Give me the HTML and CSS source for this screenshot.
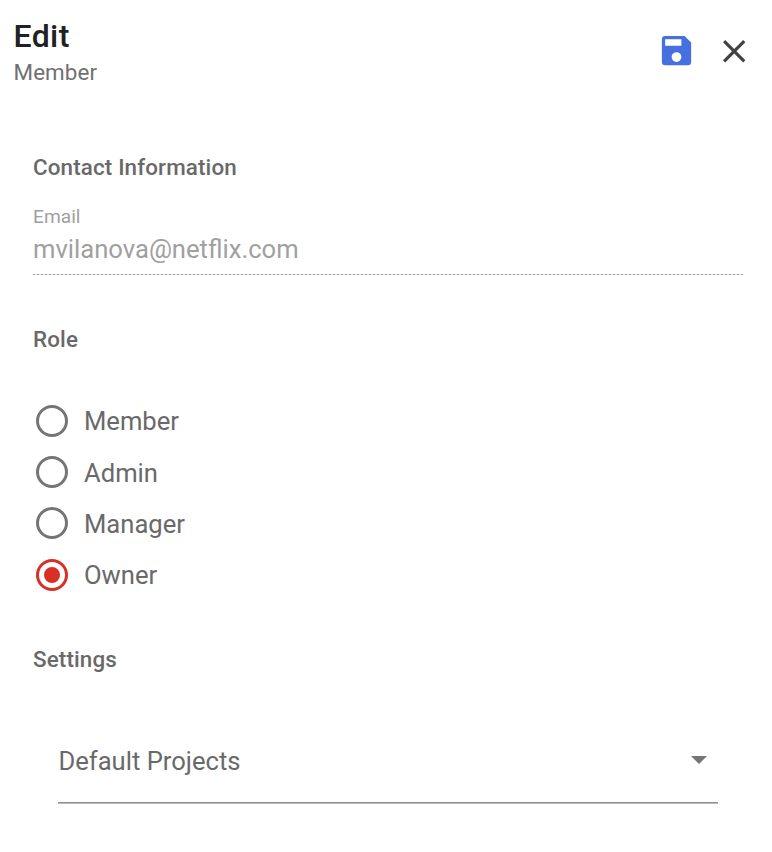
FILE: index.html
```
<!DOCTYPE html>
<html lang="en">
<head>
<meta charset="utf-8">
<title>Edit Member</title>
<link rel="stylesheet" href="styles.css">
</head>
<body>
<header class="header">
  <div class="titles">
    <h1 class="title">Edit</h1>
    <p class="subtitle">Member</p>
  </div>
  <button class="icon-button save" aria-label="Save">
    <svg viewBox="0 0 24 24"><path d="M15 9H5V5h10m-3 14a3 3 0 0 1-3-3 3 3 0 0 1 3-3 3 3 0 0 1 3 3 3 3 0 0 1-3 3m5-16H5a2 2 0 0 0-2 2v14a2 2 0 0 0 2 2h14a2 2 0 0 0 2-2V7l-4-4z"/></svg>
  </button>
  <button class="icon-button close" aria-label="Close">
    <svg viewBox="0 0 24 24"><path d="M19 6.41 17.59 5 12 10.59 6.41 5 5 6.41 10.59 12 5 17.59 6.41 19 12 13.41 17.59 19 19 17.59 13.41 12z"/></svg>
  </button>
</header>
<main class="content">
  <section class="contact">
    <h2 class="heading">Contact Information</h2>
    <div class="email">
      <div class="email-label">Email</div>
      <div class="email-value">mvilanova@netflix.com</div>
    </div>
  </section>
  <section class="role">
    <h2 class="heading">Role</h2>
    <div class="options">
      <label class="option"><span class="radio"></span><span class="option-text">Member</span></label>
      <label class="option"><span class="radio"></span><span class="option-text">Admin</span></label>
      <label class="option"><span class="radio"></span><span class="option-text">Manager</span></label>
      <label class="option"><span class="radio checked"></span><span class="option-text">Owner</span></label>
    </div>
  </section>
  <section class="settings">
    <h2 class="heading">Settings</h2>
    <div class="select">
      <span>Default Projects</span>
      <svg class="arrow" viewBox="0 0 16 8"><path d="M0 0h16L8 8z"/></svg>
    </div>
  </section>
</main>
</body>
</html>
```

FILE: styles.css
```
* { box-sizing: border-box; }
body { margin: 0; background: #fff; color: #696969; font-family: Roboto, sans-serif; }
h1, h2, p { margin: 0; }
.header { display: flex; align-items: flex-start; height: 153px; padding: 16px 18.5px 0 13.5px; }
.titles { flex: 1; }
.title { font-size: 32px; line-height: 40px; font-weight: 500; letter-spacing: 0.4px; color: #212121; }
.subtitle { font-size: 22.4px; line-height: 32px; letter-spacing: 0.1px; color: #707070; }
.icon-button { padding: 0; border: 0; background: none; }
.icon-button svg { display: block; width: 100%; height: 100%; }
.save { width: 39px; height: 39px; margin: 15.4px 19px 0 0; fill: #466fe0; }
.close { width: 38.4px; height: 38.4px; margin-top: 16px; fill: #424242; }
.content { padding: 0 29px 0 33px; }
.heading { font-size: 22.4px; line-height: 28px; font-weight: 500; letter-spacing: 0.14px; }
.contact { height: 172px; }
.email { height: 94px; color: #a0a0a0; background: repeating-linear-gradient(90deg, #9e9e9e 0 2.4px, #e2e2e2 2.4px 4px) bottom / 100% 1px no-repeat; padding-top: 23px; }
.email-label { font-size: 19.2px; line-height: 26px; }
.email-value { font-size: 25.6px; line-height: 38px; }
.role { height: 320px; }
.options { display: grid; grid-auto-rows: 51.3px; padding-top: 42px; }
.option { display: flex; align-items: center; gap: 16px; padding-left: 3px; font-size: 25.6px; line-height: 30px; }
.option-text { padding-top: 1.6px; }
.radio { display: flex; width: 32px; height: 32px; border: 3px solid #757575; border-radius: 50%; align-items: center; justify-content: center; }
.checked { border-color: #d93025; }
.checked::after { content: ""; width: 16px; height: 16px; border-radius: 50%; background: #d93025; }
.select { display: flex; justify-content: space-between; margin: 47px 25px 0; height: 84px; padding: 26px 11.5px 0 0.4px; background: linear-gradient(#8e8e8e 0 1px, #bcbcbc 1px 2px) bottom / 100% 2px no-repeat; font-size: 25.6px; line-height: 30px; }
.arrow { width: 16px; height: 8px; margin-top: 10.3px; fill: #757575; }
```
